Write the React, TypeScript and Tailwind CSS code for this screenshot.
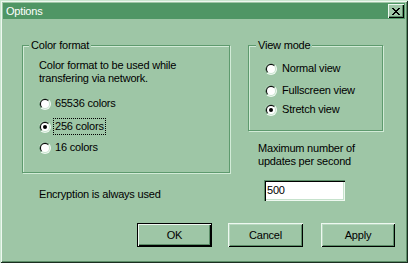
import React from "react";

function Radio({ checked }: { checked?: boolean }) {
  return (
    <svg width="12" height="12" viewBox="0 0 12 12" className="shrink-0">
      <circle cx="6" cy="6" r="6" fill="#eef8f0" />
      <path d="M1.76 10.24 A6 6 0 0 1 10.24 1.76 Z" fill="#5c8e68" />
      <circle cx="6" cy="6" r="5" fill="#c6e2cc" />
      <path d="M2.46 9.54 A5 5 0 0 1 9.54 2.46 Z" fill="#000" />
      <circle cx="6" cy="6" r="4" fill="#fff" />
      {checked && <circle cx="6" cy="6" r="2" fill="#000" />}
    </svg>
  );
}

function Btn({ label, def, w }: { label: string; def?: boolean; w: string }) {
  const cls = def
    ? "border border-black shadow-[inset_1px_1px_0_#eef8f0,inset_-1px_-1px_0_#000,inset_-2px_-2px_0_#5c8e68]"
    : "shadow-[inset_1px_1px_0_#eef8f0,inset_-1px_-1px_0_#000,inset_2px_2px_0_#b8d8bf,inset_-2px_-2px_0_#5c8e68]";
  return (
    <div className={`${w} h-[24px] flex items-center justify-center text-black ${cls}`}>
      {label}
    </div>
  );
}

export default function App() {
  return (
    <div className="w-[408px] h-[263px] bg-[#9ec6a6] flex flex-col p-[3px] text-[11px] leading-[13px] tracking-[-0.2px] text-black font-['Liberation_Sans',Arial,sans-serif] shadow-[inset_1px_1px_0_#c9e6cf,inset_-1px_-1px_0_#1a2e20,inset_2px_2px_0_#eef8f0,inset_-2px_-2px_0_#5c8e68]">
      {/* title bar */}
      <div className="h-[16px] bg-[#4f9665] flex items-center justify-between pl-[3px] pr-[1px]">
        <span className="text-white text-[11px]">Options</span>
        <div className="w-[16px] h-[14px] bg-[#9ec6a6] flex items-center justify-center shadow-[inset_1px_1px_0_#eef8f0,inset_-1px_-1px_0_#000,inset_-2px_-2px_0_#5c8e68]">
          <svg width="8" height="7" viewBox="0 0 8 7" shapeRendering="crispEdges">
            <path
              fill="#000"
              d="M0 0h2v1H0zM6 0h2v1H6zM1 1h2v1H1zM5 1h2v1H5zM2 2h4v1H2zM3 3h2v1H3zM2 4h4v1H2zM1 5h2v1H1zM5 5h2v1H5zM0 6h2v1H0zM6 6h2v1H6z"
            />
          </svg>
        </div>
      </div>

      {/* body */}
      <div className="h-[204px] flex">
        {/* left column */}
        <div className="ml-[19px] w-[208px] flex flex-col">
          <div className="mt-[26px] h-[128px] relative border border-[#5e9a6e] shadow-[inset_1px_1px_0_#d2ebd7,1px_1px_0_#d2ebd7] pl-[16px] pt-[13px] flex flex-col">
            <span className="absolute left-[6px] top-[-7px] px-[2px] bg-[#9ec6a6]">Color format</span>
            <div>Color format to be used while</div>
            <div>transfering via network.</div>
            <div className="mt-[12px] h-[13px] flex items-center gap-[4px]">
              <Radio />
              <span>65536 colors</span>
            </div>
            <div className="mt-[10px] h-[13px] flex items-center gap-[4px]">
              <Radio checked />
              <span className="outline-1 outline-dotted outline-black outline-offset-[1px]">256 colors</span>
            </div>
            <div className="mt-[8px] h-[13px] flex items-center gap-[4px]">
              <Radio />
              <span>16 colors</span>
            </div>
          </div>
          <div className="mt-[15px] pl-[17px]">Encryption is always used</div>
        </div>

        {/* right column */}
        <div className="ml-[18px] w-[135px] flex flex-col">
          <div className="mt-[26px] h-[86px] relative border border-[#5e9a6e] shadow-[inset_1px_1px_0_#d2ebd7,1px_1px_0_#d2ebd7] pl-[16px] pt-[16px] flex flex-col">
            <span className="absolute left-[7px] top-[-7px] px-[2px] bg-[#9ec6a6]">View mode</span>
            <div className="h-[13px] flex items-center gap-[5px]">
              <Radio />
              <span>Normal view</span>
            </div>
            <div className="mt-[9px] h-[13px] flex items-center gap-[5px]">
              <Radio />
              <span>Fullscreen view</span>
            </div>
            <div className="mt-[6px] h-[13px] flex items-center gap-[5px]">
              <Radio checked />
              <span>Stretch view</span>
            </div>
          </div>
          <div className="mt-[11px] pl-[10px]">
            <div>Maximum number of</div>
            <div>updates per second</div>
          </div>
          <div className="mt-[12px] ml-[16px] w-[81px] h-[21px] bg-white flex items-center pl-[3px] shadow-[inset_1px_1px_0_#5c8e68,inset_2px_2px_0_#000,inset_-1px_-1px_0_#eef8f0,inset_-2px_-2px_0_#c6e2cc]">
            500
          </div>
        </div>
      </div>

      {/* buttons */}
      <div className="flex">
        <div className="ml-[134px]">
          <Btn label="OK" def w="w-[75px]" />
        </div>
        <div className="ml-[16px]">
          <Btn label="Cancel" w="w-[75px]" />
        </div>
        <div className="ml-[18px]">
          <Btn label="Apply" w="w-[74px]" />
        </div>
      </div>
    </div>
  );
}
